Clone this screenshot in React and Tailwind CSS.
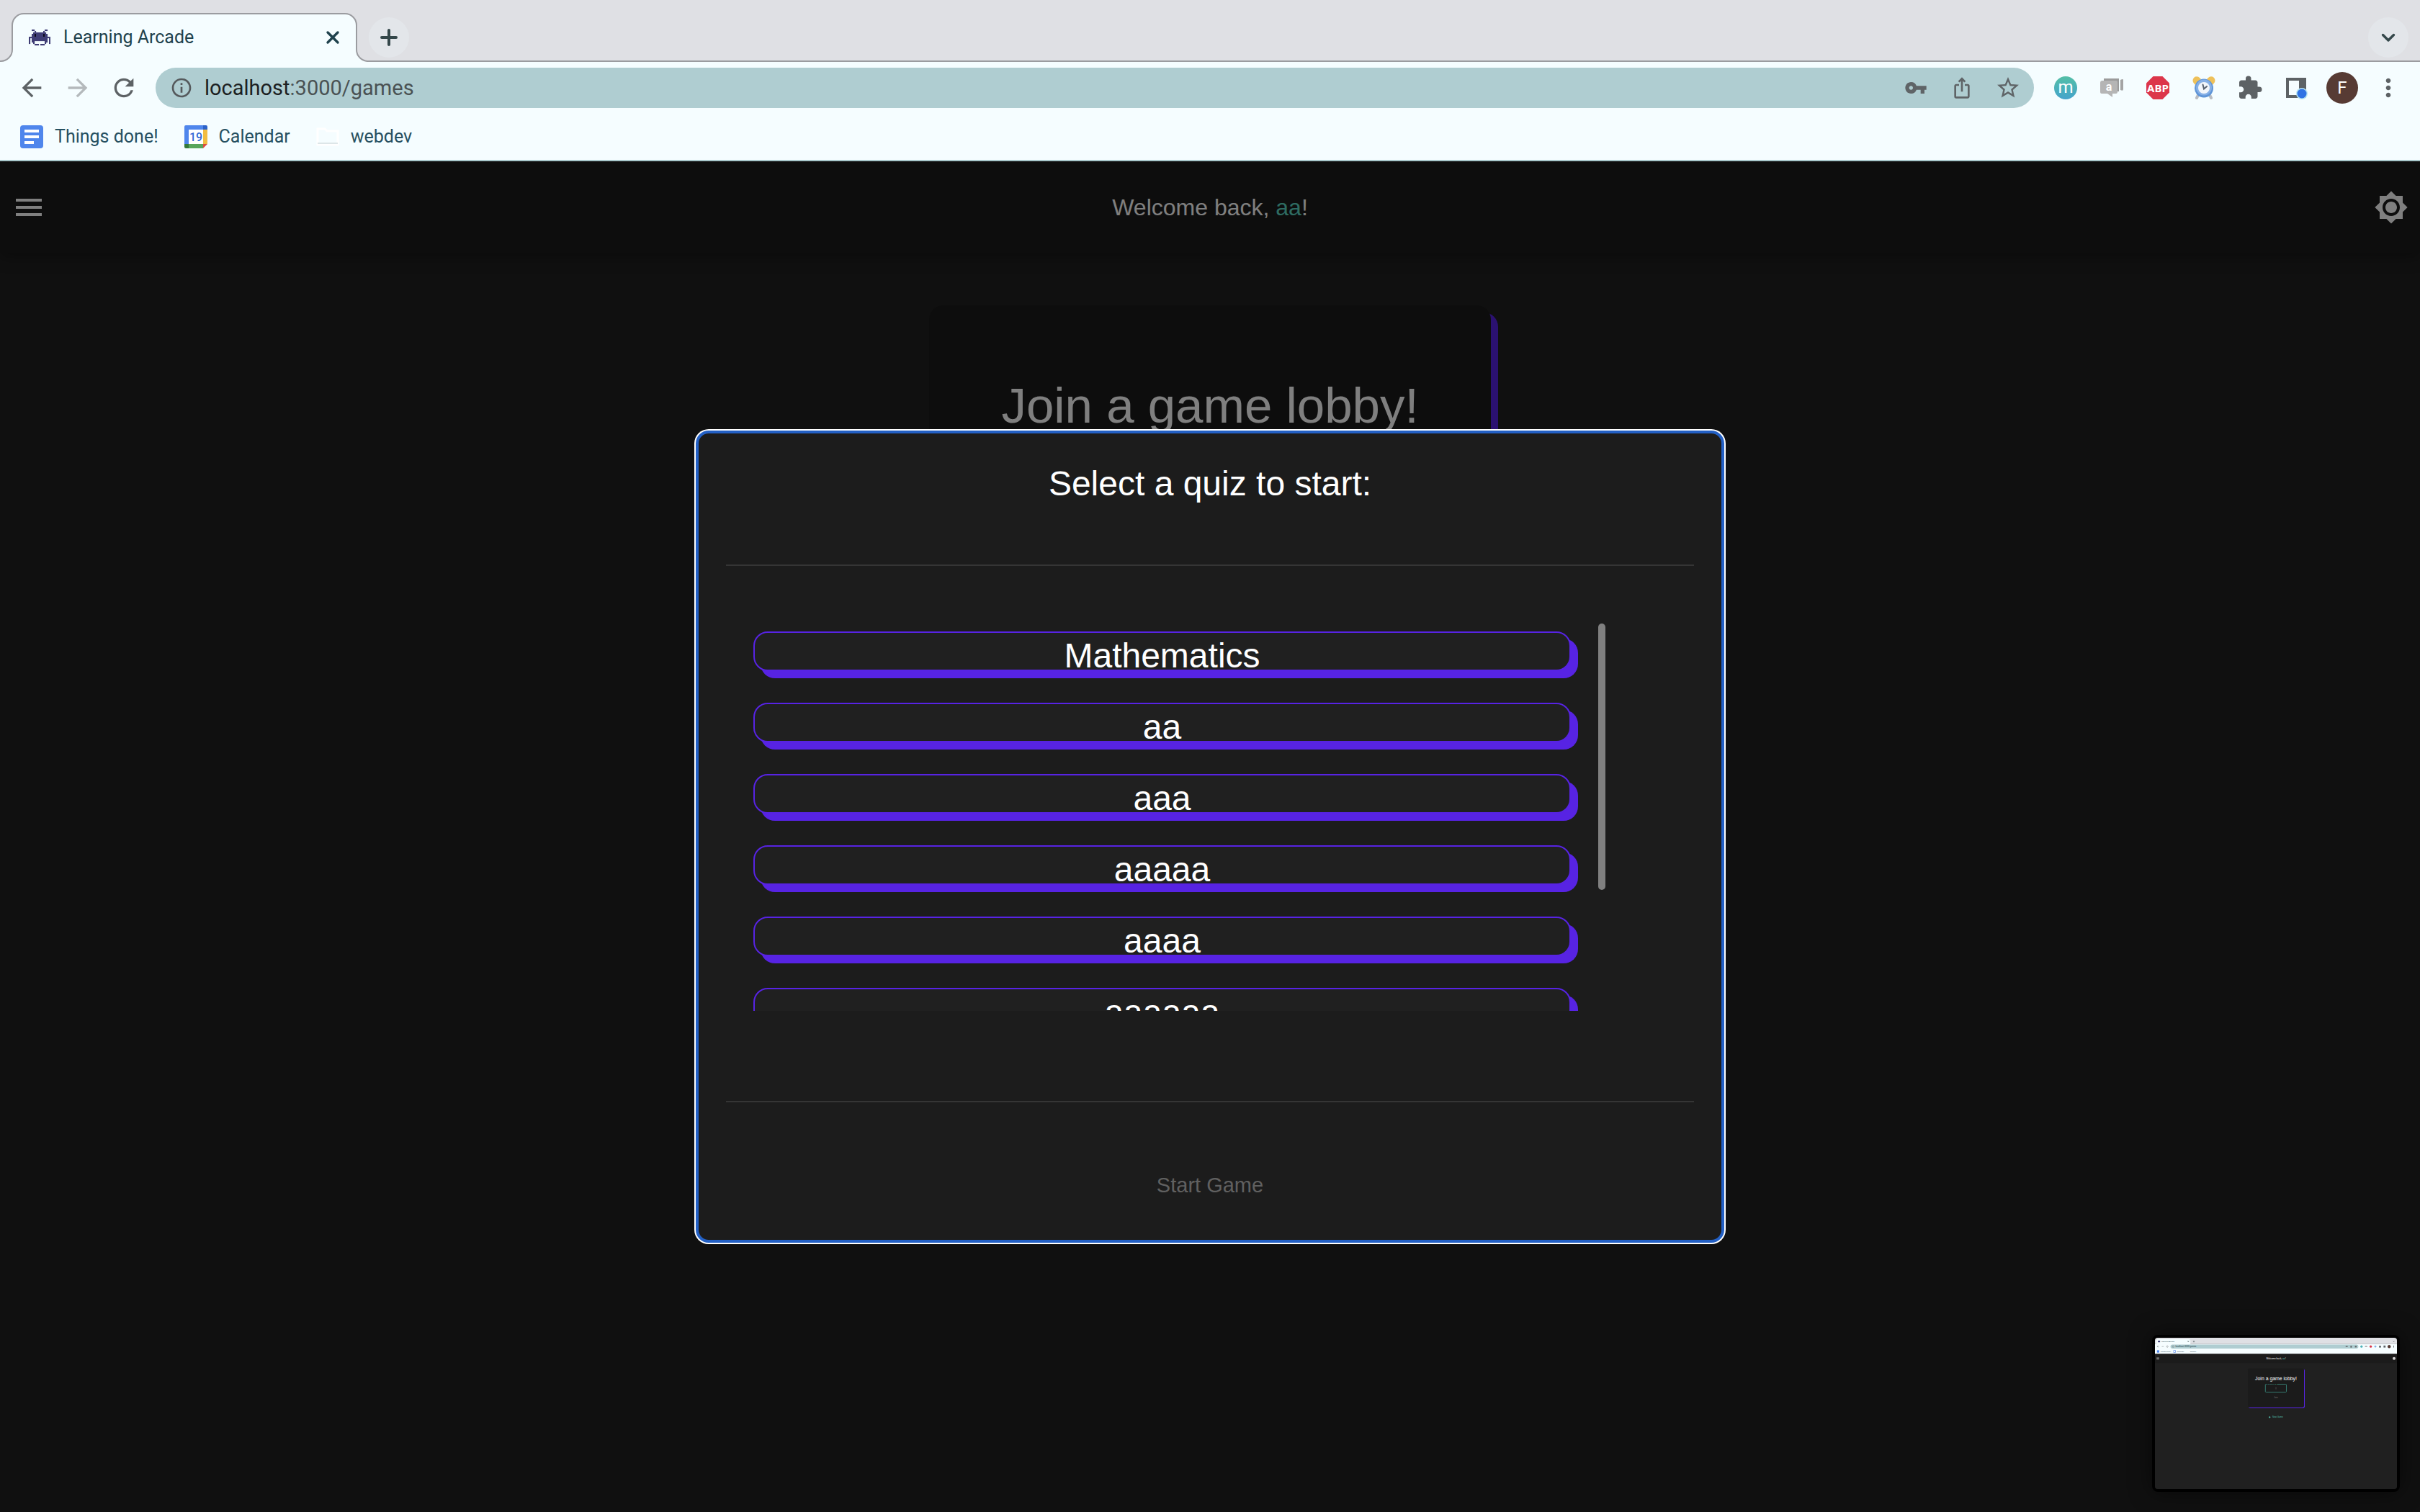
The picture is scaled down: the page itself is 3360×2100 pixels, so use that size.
import {
  MdArrowBack,
  MdArrowForward,
  MdRefresh,
  MdOutlineInfo,
  MdVpnKey,
  MdIosShare,
  MdStarBorder,
  MdExtension,
  MdMoreVert,
  MdMenu,
  MdBrightness7,
} from "react-icons/md";

const INVADER = [
  "..##.......##..",
  "....#.....#....",
  "...#########...",
  "..##k#####k##..",
  "..##k#####k##..",
  "###############",
  "#.###########.#",
  "#.###########.#",
  "#.##.......##.#",
  "#..#.......#..#",
  "....###.###....",
];

function InvaderIcon() {
  return (
    <svg viewBox="0 0 15 11.5" className="h-[23px] w-[30px]" preserveAspectRatio="none" aria-hidden="true">
      {INVADER.flatMap((row, y) =>
        [...row].map((c, x) =>
          c === "." ? null : (
            <rect key={`${x}-${y}`} x={x} y={y} width="1.05" height="1.05" fill={c === "k" ? "#0c0a1c" : "#3f3d75"} />
          )
        )
      )}
    </svg>
  );
}

function TabStrip() {
  return (
    <div className="flex h-[86px] items-end bg-[#dfe0e4]">
      <div className="relative flex h-[68px] w-[512px] items-center">
        <svg viewBox="0 0 512 68" className="absolute inset-0 h-full w-full" aria-hidden="true">
          <path
            d="M0 68V67H1A16 16 0 0 0 17 51V17A16 16 0 0 1 33 1H479A16 16 0 0 1 495 17V51A16 16 0 0 0 511 67H512V68Z"
            fill="#f5fdff"
          />
          <path
            d="M0 67H1A16 16 0 0 0 17 51V17A16 16 0 0 1 33 1H479A16 16 0 0 1 495 17V51A16 16 0 0 0 511 67H512"
            fill="none"
            stroke="#9b9ca0"
            strokeWidth="2"
          />
        </svg>
        <div className="relative flex flex-1 items-center pr-9 pl-10">
          <InvaderIcon />
          <span className="ml-[18px] flex-1 text-[25px] leading-8 text-[#1f424d]">Learning Arcade</span>
          <button type="button" aria-label="Close tab" className="flex size-7 items-center justify-center">
            <svg viewBox="0 0 28 28" className="size-7" fill="none" stroke="#1f424d" strokeWidth="3.4" strokeLinecap="round">
              <path d="M7 7L21 21M21 7L7 21" />
            </svg>
          </button>
        </div>
      </div>
      <div className="flex h-[68px] flex-1 items-start justify-between border-b-2 border-[#9b9ca0] pt-[6px] pr-4">
        <button type="button" aria-label="New tab" className="flex size-14 items-center justify-center rounded-full bg-[#e3e6ea]">
          <svg viewBox="0 0 24 24" className="size-6" fill="none" stroke="#34474a" strokeWidth="4" strokeLinecap="round">
            <path d="M12 2V22M2 12H22" />
          </svg>
        </button>
        <button type="button" aria-label="Search tabs" className="flex size-14 items-center justify-center rounded-full bg-[#e3e6ea]">
          <svg viewBox="0 0 24 24" className="size-6" fill="none" stroke="#34474a" strokeWidth="3.4" strokeLinecap="round" strokeLinejoin="round">
            <path d="M4.500 8.500L12 16L19.500 8.500" />
          </svg>
        </button>
      </div>
    </div>
  );
}

function ClockIcon() {
  return (
    <svg viewBox="0 0 32 32" className="size-8" aria-hidden="true">
      <path d="M8.500 25L6 30M23.500 25L26 30" stroke="#b9bcc2" strokeWidth="4" strokeLinecap="round" />
      <path d="M2 9.500A4.500 4.500 0 0 1 10 2L12 4L4 12Z" fill="#eec15a" />
      <path d="M30 9.500A4.500 4.500 0 0 0 22 2L20 4L28 12Z" fill="#eec15a" />
      <circle cx="16" cy="16.500" r="13" fill="#5f95d8" />
      <circle cx="16" cy="15.500" r="11" fill="#86b0e6" />
      <circle cx="16" cy="16" r="8" fill="#f2f6fb" />
      <path d="M14.500 11.500L16 17.500L20 14" fill="none" stroke="#56606e" strokeWidth="2" strokeLinecap="round" />
    </svg>
  );
}

function Extensions() {
  const cell = "flex w-16 items-center justify-center";
  return (
    <div className="mr-3 ml-3 flex items-center text-[#5d6265]">
      <button type="button" aria-label="Momentum" className={cell}>
        <span className="flex size-8 items-center justify-center rounded-full bg-linear-to-b from-[#54bfa6] to-[#45a3cb] pb-[2px] text-[24px] leading-6 text-white">
          m
        </span>
      </button>
      <button type="button" aria-label="Dictionary" className={cell}>
        <svg viewBox="0 0 32 32" className="size-8" aria-hidden="true">
          <path d="M5 3H26V21H5Z" fill="#9b9b9b" />
          <path d="M28 5Q32 3 32 5V18Q32 21 28 19Z" fill="#a4a4a4" />
          <path d="M3 6H22Q24 6 24 8V22Q24 24 22 24H17V29L10 24H2Q0 24 0 22V9Q0 6 3 6Z" fill="#b5b5b5" />
          <text x="12" y="20" textAnchor="middle" fontFamily="Roboto, sans-serif" fontWeight="700" fontSize="16" fill="#fff">
            a
          </text>
        </svg>
      </button>
      <button type="button" aria-label="Adblock Plus" className={cell}>
        <svg viewBox="0 0 32 32" className="size-8" aria-hidden="true">
          <path d="M9.500 0H22.500L32 9.500V22.500L22.500 32H9.500L0 22.500V9.500Z" fill="#dc364a" />
          <text x="16" y="21.500" textAnchor="middle" fontFamily="'Open Sans', sans-serif" fontWeight="700" fontSize="15" fill="#fff">
            ABP
          </text>
        </svg>
      </button>
      <button type="button" aria-label="Timer" className={cell}>
        <ClockIcon />
      </button>
      <button type="button" aria-label="Extensions" className={cell}>
        <MdExtension className="size-9" />
      </button>
      <button type="button" aria-label="Side panel" className={cell}>
        <svg viewBox="0 0 32 32" className="size-8" aria-hidden="true">
          <path fillRule="evenodd" d="M2 2H30V30H2ZM6 6V26H20V6Z" fill="#5d6265" />
          <path d="M20 6V26H6" fill="none" />
          <circle cx="24" cy="24" r="8" fill="#b5e3f2" />
          <circle cx="24" cy="24" r="6.500" fill="#2f72e4" />
        </svg>
      </button>
      <button type="button" aria-label="Profile" className={cell}>
        <span className="flex size-11 items-center justify-center rounded-full bg-[#573b34] text-[24px] leading-8 text-white">F</span>
      </button>
      <button type="button" aria-label="Menu" className={cell}>
        <MdMoreVert className="size-10" />
      </button>
    </div>
  );
}

function AddressBar() {
  return (
    <div className="flex h-[72px] items-center bg-[#f5fdff]">
      <div className="flex w-[216px] items-center gap-6 pl-6 text-[#5d6265]">
        <button type="button" aria-label="Back">
          <MdArrowBack className="size-10" />
        </button>
        <button type="button" aria-label="Forward" disabled className="text-[#b4b9bc]">
          <MdArrowForward className="size-10" />
        </button>
        <button type="button" aria-label="Reload">
          <MdRefresh className="size-10" />
        </button>
      </div>
      <div className="flex h-14 flex-1 items-center rounded-full bg-[#afcdd1] pr-[18px] pl-5 text-[#55595c]">
        <MdOutlineInfo className="size-8" />
        <div className="ml-4 flex-1 text-[29px] leading-8">
          <span className="text-[#1c1f22]">localhost</span>
          <span className="text-[#4a5254]">:3000/games</span>
        </div>
        <div className="flex items-center gap-7 text-[#5f6467]">
          <button type="button" aria-label="Passwords" className="flex size-9 items-center justify-center">
            <MdVpnKey className="size-8" />
          </button>
          <button type="button" aria-label="Share" className="flex size-9 items-center justify-center">
            <MdIosShare className="size-8" />
          </button>
          <button type="button" aria-label="Bookmark" className="flex size-9 items-center justify-center">
            <MdStarBorder className="size-9" />
          </button>
        </div>
      </div>
      <Extensions />
    </div>
  );
}

function Bookmarks() {
  const link = "flex items-center gap-4";
  return (
    <nav className="flex h-[66px] items-start gap-9 border-b-2 border-[#a9c8cc] bg-[#f5fdff] pt-4 pl-7 text-[25px] leading-8 text-[#265061]">
      <a href="#docs" className={link}>
        <svg viewBox="0 0 32 32" className="size-8" aria-hidden="true">
          <rect width="32" height="32" rx="4" fill="#4f86ec" />
          <path d="M6 6H26V10H6ZM6 14H26V18H6ZM6 22H19V26H6Z" fill="#fff" />
        </svg>
        Things done!
      </a>
      <a href="#calendar" className={link}>
        <svg viewBox="0 0 32 32" className="size-8" aria-hidden="true">
          <path d="M2 0H26V6H6V26H0V2Q0 0 2 0Z" fill="#4f86ec" />
          <path d="M26 0H30Q32 0 32 2V6H26Z" fill="#2b62c9" />
          <path d="M26 6H32V26H26Z" fill="#f2bd42" />
          <path d="M6 26H26V32H6Z" fill="#58a55c" />
          <path d="M0 26H6V32H2Q0 32 0 30Z" fill="#34793b" />
          <path d="M26 26H32L26 32Z" fill="#dc4d3e" />
          <path d="M6 6H26V26H6Z" fill="#fff" />
          <text x="16" y="22" textAnchor="middle" fontFamily="Roboto, sans-serif" fontWeight="500" fontSize="16" fill="#3169d6">
            19
          </text>
        </svg>
        Calendar
      </a>
      <a href="#webdev" className={link}>
        <svg viewBox="0 0 32 32" className="size-8" aria-hidden="true">
          <path d="M2 5H12L15 8H30V27H2Z" fill="none" stroke="#fff" strokeWidth="3" />
          <path d="M2 25H30" stroke="#dde6e8" strokeWidth="2" />
        </svg>
        webdev
      </a>
    </nav>
  );
}

function GamesPage() {
  return (
    <div className="flex flex-1 flex-col bg-[#202020] text-white">
      <header className="flex h-32 items-center justify-between bg-[#1b1b1b] px-4 shadow-[0_4px_20px_rgba(0,0,0,0.35)]">
        <button type="button" aria-label="Open menu">
          <MdMenu className="size-12" />
        </button>
        <p className="text-[32px] leading-10">
          Welcome back, <span className="text-[#5cd6c2]">aa</span>!
        </p>
        <button type="button" aria-label="Toggle theme">
          <MdBrightness7 className="size-12" />
        </button>
      </header>
      <section className="mx-auto mt-[72px] h-[540px] w-[780px] rounded-[20px] bg-[#1b1b1b] pt-[100px] text-center shadow-[10px_10px_0_#5723e3]">
        <h1 className="text-[69px] leading-20">Join a game lobby!</h1>
      </section>
    </div>
  );
}

const QUIZZES = ["Mathematics", "aa", "aaa", "aaaaa", "aaaa", "aaaaaa"];

function QuizDialog() {
  return (
    <div
      role="dialog"
      aria-labelledby="quiz-title"
      className="w-[1428px] max-w-full rounded-[18px] border-4 border-[#2360c5] bg-[#1c1c1c] px-[38px] pt-[38px] pb-[41px] text-white ring-2 ring-white"
    >
      <h2 id="quiz-title" className="text-center text-[48px] leading-16">
        Select a quiz to start:
      </h2>
      <hr className="mt-20 border-t-2 border-[#353535]" />
      <div className="mt-20 flex pr-[123px]">
        <ul className="flex h-[538px] flex-1 flex-col gap-11 overflow-y-auto pt-[11px] pr-[38px] pl-[38px] [scrollbar-width:none]">
          {QUIZZES.map((name) => (
            <li key={name} className="flex h-[55px] shrink-0">
              <button
                type="button"
                className="flex flex-1 items-start justify-center rounded-[20px] border-2 border-[#5723e3] bg-[#202020] text-[48px] leading-16 shadow-[10px_10px_0_#5723e3]"
              >
                {name}
              </button>
            </li>
          ))}
        </ul>
        <div className="h-[370px] w-[10px] rounded-full bg-[#808080]" />
      </div>
      <hr className="mt-[125px] border-t-2 border-[#353535]" />
      <div className="flex justify-center pt-20">
        <button type="button" disabled className="px-4 py-[15px] text-[29px] leading-10 text-[#606060]">
          Start Game
        </button>
      </div>
    </div>
  );
}

function Thumbnail() {
  return (
    <svg
      viewBox="0 0 3360 2100"
      className="fixed right-7 bottom-7 h-[218px] w-[344px] rounded-[8px] border-4 border-black bg-[#202020] shadow-[0_0_30px_rgba(0,0,0,0.5)]"
      role="img"
      aria-label="Screenshot preview"
      fontFamily="'Liberation Sans', Arial, sans-serif"
    >
      <rect width="3360" height="2100" fill="#202020" />
      <rect width="3360" height="88" fill="#dfe0e4" />
      <path d="M18 90V40Q18 20 40 20H470Q492 20 492 40V90Z" fill="#f5fdff" />
      <rect y="88" width="3360" height="136" fill="#f5fdff" />
      <rect x="216" y="96" width="2608" height="54" rx="27" fill="#afcdd1" />
      <rect x="41" y="42" width="30" height="20" fill="#3f3d75" />
      <g fontFamily="Roboto, sans-serif" fontSize="25" fill="#1f424d">
        <text x="89" y="60">Learning Arcade</text>
        <text x="284" y="132" fontSize="29">localhost:3000/games</text>
        <text x="77" y="198">Things done!</text>
        <text x="304" y="198">Calendar</text>
        <text x="487" y="198">webdev</text>
      </g>
      <path d="M455 44L471 60M471 44L455 60M528 52H552M540 40V64M3306 48L3316 58L3326 48" fill="none" stroke="#34474a" strokeWidth="5" />
      <path d="M57 122H31L43 110M31 122L43 134M95 122H121" fill="none" stroke="#5d6265" strokeWidth="4" />
      <circle cx="172" cy="122" r="11" fill="none" stroke="#5d6265" strokeWidth="4" />
      <circle cx="252" cy="122" r="12" fill="none" stroke="#5d6265" strokeWidth="4" />
      <rect x="28" y="174" width="32" height="32" fill="#4f86ec" />
      <rect x="256" y="174" width="32" height="32" fill="#4f86ec" />
      <rect x="262" y="180" width="20" height="20" fill="#fff" />
      <g fill="#5d6265">
        <rect x="2648" y="114" width="28" height="14" />
        <rect x="2714" y="112" width="20" height="24" />
        <rect x="2776" y="112" width="24" height="22" />
        <rect x="3112" y="110" width="26" height="26" />
        <rect x="3174" y="108" width="28" height="28" />
        <rect x="3312" y="108" width="8" height="28" />
      </g>
      <circle cx="2868" cy="122" r="16" fill="#4bb2b8" />
      <rect x="2916" y="110" width="32" height="20" fill="#b5b5b5" />
      <circle cx="2996" cy="122" r="16" fill="#dc364a" />
      <circle cx="3060" cy="122" r="14" fill="#86b0e6" />
      <circle cx="3252" cy="122" r="22" fill="#573b34" />
      <rect y="224" width="3360" height="128" fill="#1b1b1b" />
      <path d="M22 278H58M22 288H58M22 298H58" stroke="#fff" strokeWidth="4" />
      <circle cx="3320" cy="288" r="20" fill="#d8d8d8" />
      <text x="1680" y="299" textAnchor="middle" fontSize="32" fill="#fff">
        Welcome back, <tspan fill="#5cd6c2">aa</tspan>!
      </text>
      <rect x="1300" y="434" width="780" height="542" rx="20" fill="#5723e3" />
      <rect x="1290" y="424" width="780" height="542" rx="20" fill="#1b1b1b" />
      <text x="1680" y="590" textAnchor="middle" fontSize="69" fill="#fff">
        Join a game lobby!
      </text>
      <rect x="1533" y="645" width="292" height="110" rx="10" fill="none" stroke="#3fa292" strokeWidth="7" />
      <rect x="1556" y="636" width="138" height="20" fill="#1b1b1b" />
      <g textAnchor="middle" fill="#50bba9">
        <text x="1625" y="654" fontSize="25">Session ID</text>
        <text x="1705" y="1114" fontSize="30">New Game</text>
      </g>
      <path d="M1580 1103H1604M1592 1091V1115" stroke="#5cd6c2" strokeWidth="8" />
      <path d="M1680 684V716" stroke="#888" strokeWidth="4" />
      <text x="1680" y="844" textAnchor="middle" fontSize="29" fill="#777">
        Join
      </text>
    </svg>
  );
}

export default function App() {
  return (
    <div className="flex min-h-screen flex-col bg-[#101010] font-['Liberation_Sans',Arial,sans-serif]">
      <div className="font-['Roboto',sans-serif]">
        <TabStrip />
        <AddressBar />
        <Bookmarks />
      </div>
      <main className="relative flex flex-1 flex-col overflow-hidden">
        <GamesPage />
        <div className="absolute inset-0 flex items-center justify-center bg-black/50">
          <QuizDialog />
        </div>
      </main>
      <Thumbnail />
    </div>
  );
}
